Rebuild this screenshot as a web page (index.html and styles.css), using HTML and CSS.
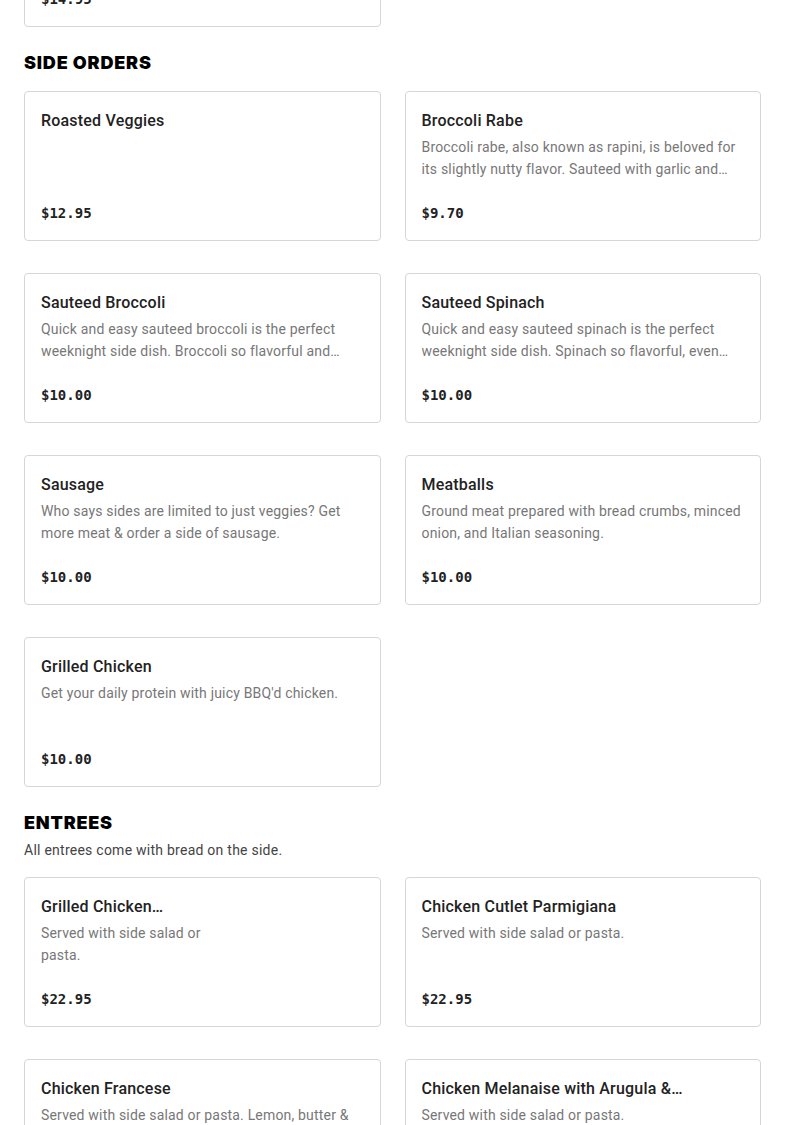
FILE: index.html
```html
<!DOCTYPE html>
<html lang="en">
<head>
<meta charset="utf-8">
<title>Menu</title>
<link rel="stylesheet" href="styles.css">
</head>
<body>
<main class="menu">
  <section class="section section-prev">
    <div class="grid">
      <div class="card">
        <div class="card-text">
          <h3 class="item-name">Garlic Bread</h3>
          <p class="item-desc"></p>
        </div>
        <div class="price">$14.95</div>
      </div>
    </div>
  </section>

  <section class="section">
    <h2 class="section-title">SIDE ORDERS</h2>
    <div class="grid">
      <div class="card">
        <div class="card-text">
          <h3 class="item-name">Roasted Veggies</h3>
          <p class="item-desc"></p>
        </div>
        <div class="price">$12.95</div>
      </div>
      <div class="card">
        <div class="card-text">
          <h3 class="item-name">Broccoli Rabe</h3>
          <p class="item-desc">Broccoli rabe, also known as rapini, is beloved for its slightly nutty flavor. Sauteed with garlic and olive oil.</p>
        </div>
        <div class="price">$9.70</div>
      </div>
      <div class="card">
        <div class="card-text">
          <h3 class="item-name">Sauteed Broccoli</h3>
          <p class="item-desc">Quick and easy sauteed broccoli is the perfect weeknight side dish. Broccoli so flavorful and tender.</p>
        </div>
        <div class="price">$10.00</div>
      </div>
      <div class="card">
        <div class="card-text">
          <h3 class="item-name">Sauteed Spinach</h3>
          <p class="item-desc">Quick and easy sauteed spinach is the perfect weeknight side dish. Spinach so flavorful, even kids love it.</p>
        </div>
        <div class="price">$10.00</div>
      </div>
      <div class="card">
        <div class="card-text">
          <h3 class="item-name">Sausage</h3>
          <p class="item-desc">Who says sides are limited to just veggies? Get more meat &amp; order a side of sausage.</p>
        </div>
        <div class="price">$10.00</div>
      </div>
      <div class="card">
        <div class="card-text">
          <h3 class="item-name">Meatballs</h3>
          <p class="item-desc">Ground meat prepared with bread crumbs, minced onion, and Italian seasoning.</p>
        </div>
        <div class="price">$10.00</div>
      </div>
      <div class="card">
        <div class="card-text">
          <h3 class="item-name">Grilled Chicken</h3>
          <p class="item-desc">Get your daily protein with juicy BBQ'd chicken.</p>
        </div>
        <div class="price">$10.00</div>
      </div>
    </div>
  </section>

  <section class="section">
    <h2 class="section-title">ENTREES</h2>
    <p class="section-sub">All entrees come with bread on the side.</p>
    <div class="grid">
      <div class="card">
        <div class="card-text card-text-narrow">
          <h3 class="item-name">Grilled Chicken Parmigiana</h3>
          <p class="item-desc">Served with side salad or pasta.</p>
        </div>
        <div class="price">$22.95</div>
      </div>
      <div class="card">
        <div class="card-text">
          <h3 class="item-name">Chicken Cutlet Parmigiana</h3>
          <p class="item-desc">Served with side salad or pasta.</p>
        </div>
        <div class="price">$22.95</div>
      </div>
      <div class="card">
        <div class="card-text">
          <h3 class="item-name">Chicken Francese</h3>
          <p class="item-desc">Served with side salad or pasta. Lemon, butter &amp; white wine sauce.</p>
        </div>
        <div class="price">$22.95</div>
      </div>
      <div class="card">
        <div class="card-text">
          <h3 class="item-name">Chicken Melanaise with Arugula &amp; Mozzarella</h3>
          <p class="item-desc">Served with side salad or pasta.</p>
        </div>
        <div class="price">$22.95</div>
      </div>
    </div>
  </section>
</main>
</body>
</html>
```
FILE: styles.css
```css
* { box-sizing: border-box; }

html, body {
  margin: 0;
  padding: 0;
  background: #ffffff;
  overflow: hidden;
}

body {
  font-family: Roboto, "Liberation Sans", sans-serif;
  color: #222222;
}

.menu {
  padding: 0 24px;
  display: flex;
  flex-direction: column;
}

.section-prev {
  margin-top: -123px;
}

.section + .section {
  margin-top: 24px;
}

.section-title {
  margin: 0 0 16px;
  font-family: Inter, "Liberation Sans", sans-serif;
  font-weight: 900;
  font-size: 18px;
  line-height: 24px;
  letter-spacing: 0.8px;
  color: #000000;
}

.section-sub {
  margin: -12px 0 16px;
  font-size: 14px;
  line-height: 22px;
  letter-spacing: 0.25px;
  color: #444444;
}

.grid {
  display: grid;
  grid-template-columns: 1fr 1fr;
  column-gap: 24px;
  row-gap: 32px;
}

.card {
  height: 150px;
  border: 1px solid #d6d6d6;
  border-radius: 4px;
  padding: 17px 16px 16px;
  display: flex;
  flex-direction: column;
  overflow: hidden;
}

.card-text {
  display: flex;
  flex-direction: column;
  gap: 3px;
}

.card-text-narrow {
  width: 190px;
}

.item-name {
  margin: 0;
  font-size: 16px;
  font-weight: 500;
  line-height: 24px;
  letter-spacing: 0.2px;
  color: #222222;
  display: -webkit-box;
  -webkit-line-clamp: 1;
  -webkit-box-orient: vertical;
  overflow: hidden;
}

.item-desc {
  margin: 0;
  font-size: 14px;
  line-height: 22px;
  letter-spacing: 0.18px;
  color: #777777;
  display: -webkit-box;
  -webkit-line-clamp: 2;
  -webkit-box-orient: vertical;
  overflow: hidden;
}

.price {
  margin-top: auto;
  font-family: "DejaVu Sans Mono", "Liberation Mono", monospace;
  font-size: 14px;
  font-weight: 700;
  line-height: 22px;
  color: #222222;
}
```
